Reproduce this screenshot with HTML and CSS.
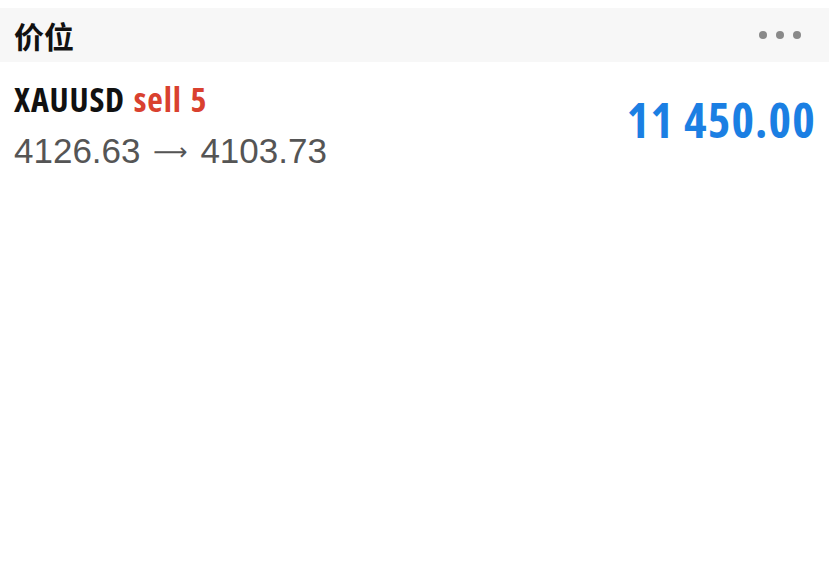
FILE: index.html
```html
<!DOCTYPE html>
<html lang="zh">

<head>
    <meta charset="UTF-8">
    <meta name="viewport" content="width=device-width, initial-scale=1.0">
    <title>价位</title>
    <link rel="stylesheet" href="styles.css">
</head>

<body>
    <div class="panel">
        <div class="panel-header">
            <h2 class="panel-title">价位</h2>
            <div class="more-btn">
                <span class="dot"></span>
                <span class="dot"></span>
                <span class="dot"></span>
            </div>
        </div>

        <div class="position-row">
            <div class="position-info">
                <div class="symbol">XAUUSD <span class="sell">sell 5</span></div>
                <div class="prices">4126.63 <span class="arrow">&#10230;</span> 4103.73</div>
            </div>
            <div class="profit">11 450.00</div>
        </div>
    </div>
</body>

</html>
```

FILE: styles.css
```css
body {
    margin: 0;
    padding-top: 8px;
    background: #fff;
    font-family: "Liberation Sans", Arial, sans-serif;
}

.panel-header {
    display: flex;
    align-items: center;
    justify-content: space-between;
    height: 54px;
    padding: 0 28px 0 14px;
    background-color: #f7f7f7;
}

.panel-title {
    margin: 0;
    font-family: "Noto Sans CJK SC", sans-serif;
    font-size: 30px;
    font-weight: bold;
    color: #111;
}

.more-btn {
    display: flex;
    gap: 9px;
}

.dot {
    width: 8px;
    height: 8px;
    border-radius: 50%;
    background-color: #8a8a8a;
}

.position-row {
    display: flex;
    align-items: flex-start;
    justify-content: space-between;
    padding: 17px 14px 0 14px;
}

.symbol {
    font-family: "Open Sans", sans-serif;
    font-stretch: 75%;
    font-size: 34px;
    font-weight: bold;
    color: #111;
    line-height: 40px;
    letter-spacing: 0.8px;
    word-spacing: 2px;
}

.sell {
    color: #d9412f;
}

.prices {
    margin-top: 12px;
    font-size: 35px;
    color: #555;
    line-height: 40px;
}

.arrow {
    margin: 0 3px;
    font-family: "DejaVu Sans", sans-serif;
    font-size: 24px;
    vertical-align: 3px;
}

.profit {
    margin-top: 17px;
    margin-right: -1px;
    font-family: "Open Sans", sans-serif;
    font-stretch: 75%;
    font-size: 48px;
    font-weight: bold;
    line-height: 48px;
    letter-spacing: 1.2px;
    color: #1b7fe3;
}
```
